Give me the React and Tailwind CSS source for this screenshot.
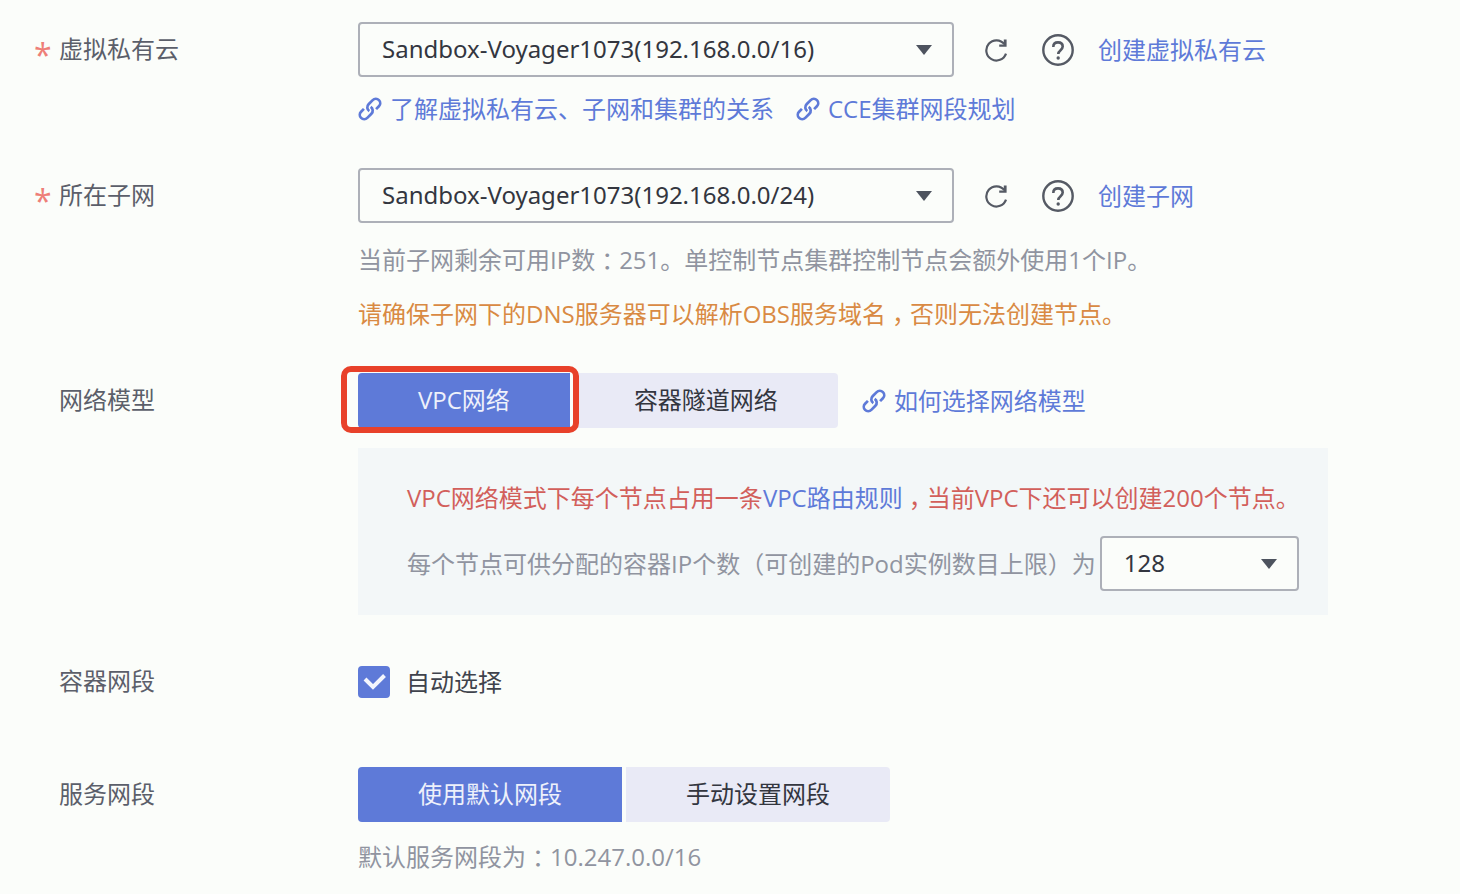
import React, { useState } from 'react';

const FONT = "font-['Open_Sans','Noto_Sans_CJK_SC',sans-serif]";

const LinkIcon = () => (
  <svg className="w-6 h-6 shrink-0" viewBox="0 0 24 24" fill="none" stroke="currentColor" strokeWidth="2.7">
    <g transform="translate(12 12) rotate(-45)">
      <path d="M4.2 4.4H8.2a4.4 4.4 0 0 0 0-8.8H2.4A4.4 4.4 0 0 0-1.9 1" />
      <path d="M-4.2-4.4H-8.2a4.4 4.4 0 0 0 0 8.8H-2.4A4.4 4.4 0 0 0 1.9-1" />
    </g>
  </svg>
);

const RefreshIcon = () => (
  <svg className="w-6 h-6" viewBox="0 0 24 24" fill="none" stroke="currentColor" strokeWidth="2.2">
    <path d="M22 15.6A10.1 10.1 0 1 1 20.4 6.2" />
    <path d="M22.6 1.4v7.4h-7.4v-2.4h4.6v-5z" fill="currentColor" stroke="none" />
  </svg>
);

const HelpIcon = () => (
  <svg className="w-8 h-8" viewBox="0 0 32 32" fill="none" stroke="currentColor" strokeWidth="2.4">
    <circle cx="16" cy="16" r="14.7" />
    <path d="M11.3 13c0-2.8 1.9-4.6 4.7-4.6s4.7 1.7 4.7 4.2c0 3.6-4.4 3.5-4.4 7.4" strokeWidth="2.6" />
    <circle cx="16.2" cy="24" r="1.7" fill="currentColor" stroke="none" />
  </svg>
);

// Half-width colon or comma, centred in a full-width cell
const Mark = ({ children }) => (
  <span className="inline-block w-6 text-center [font-feature-settings:'halt']">{children}</span>
);

const TextLink = ({ children }) => (
  <a href="#" className="text-[#5e7ad8] hover:underline">{children}</a>
);

const IconLink = ({ children }) => (
  <a href="#" className="flex items-center gap-2 text-[#5e7ad8] hover:underline">
    <LinkIcon />
    <span>{children}</span>
  </a>
);

const Select = ({ id, options, className }) => (
  <div className={`grid items-center ${className}`}>
    <select
      id={id}
      className="col-start-1 row-start-1 w-full h-[55px] appearance-none rounded-sm border-2 border-[#adb0b8] bg-[#fbfdfa] px-[22px] pb-[2px] font-['Noto_Sans',sans-serif] text-[#33363f]"
    >
      {options.map((option) => (
        <option key={option}>{option}</option>
      ))}
    </select>
    <svg className="col-start-1 row-start-1 justify-self-end mr-[22px] w-4 h-[10px] pointer-events-none" viewBox="0 0 16 10">
      <path d="M0 0h16L8 10z" fill="#4d535e" />
    </svg>
  </div>
);

const Segmented = ({ options, value, onChange }) => (
  <div className="flex gap-1">
    {options.map((option) => (
      <button
        key={option}
        type="button"
        onClick={() => onChange(option)}
        className={`h-[55px] px-[60px] pb-[2px] first:rounded-l-sm last:rounded-r-sm ${
          option === value ? 'bg-[#5e7ad8] text-[#eef1fb]' : 'bg-[#e9eaf6] text-[#33363f]'
        }`}
      >
        {option}
      </button>
    ))}
  </div>
);

const Row = ({ label, htmlFor, required, children, className = '' }) => (
  <div className={`flex items-start ${className}`}>
    <div className="w-[324px] shrink-0 h-[55px] pb-[2px] flex items-center text-[#5b5f6a]">
      <span className="w-[25px] pt-3 text-[32px] leading-8 text-[#ee7f78]">{required && '*'}</span>
      {htmlFor ? <label htmlFor={htmlFor}>{label}</label> : <span>{label}</span>}
    </div>
    <div className="min-w-0 flex-1">{children}</div>
  </div>
);

const SelectActions = ({ children }) => (
  <>
    <button type="button" aria-label="刷新" className="ml-[30px] text-[#555a64]">
      <RefreshIcon />
    </button>
    <button type="button" aria-label="帮助" className="ml-[34px] mr-6 text-[#555a64]">
      <HelpIcon />
    </button>
    <TextLink>{children}</TextLink>
  </>
);

const App = () => {
  const [model, setModel] = useState('VPC网络');
  const [service, setService] = useState('使用默认网段');
  const [auto, setAuto] = useState(true);

  return (
    <main className={`min-h-screen bg-[#fbfdfa] pl-[34px] pt-[22px] text-[24px] leading-8 ${FONT}`}>
      {/* VPC */}
      <Row label="虚拟私有云" htmlFor="vpc" required>
        <div className="flex items-center">
          <Select id="vpc" className="w-[596px]" options={['Sandbox-Voyager1073(192.168.0.0/16)']} />
          <SelectActions>创建虚拟私有云</SelectActions>
        </div>
        <div className="mt-4 flex gap-[22px]">
          <IconLink>了解虚拟私有云、子网和集群的关系</IconLink>
          <IconLink>CCE集群网段规划</IconLink>
        </div>
      </Row>

      {/* Subnet */}
      <Row label="所在子网" htmlFor="subnet" required className="mt-[43px]">
        <div className="flex items-center">
          <Select id="subnet" className="w-[596px]" options={['Sandbox-Voyager1073(192.168.0.0/24)']} />
          <SelectActions>创建子网</SelectActions>
        </div>
        <p className="mt-[21px] text-[#9094a0]">
          当前子网剩余可用IP数<Mark>：</Mark>251。单控制节点集群控制节点会额外使用1个IP。
        </p>
        <p className="mt-[22px] text-[#d98a43]">
          请确保子网下的DNS服务器可以解析OBS服务域名<Mark>，</Mark>否则无法创建节点。
        </p>
      </Row>

      {/* Network model */}
      <Row label="网络模型" className="mt-[43px]">
        <div className="flex items-center gap-6">
          <div className="relative">
            <Segmented options={['VPC网络', '容器隧道网络']} value={model} onChange={setModel} />
            <div className="absolute -left-[17px] -top-[7px] w-[238px] h-[67px] rounded-[10px] border-6 border-[#e8412a] pointer-events-none" />
          </div>
          <IconLink>如何选择网络模型</IconLink>
        </div>
        <div className="mt-5 w-fit bg-[#f3f7f8] pl-[49px] pr-7 pt-[34px] pb-6">
          <p className="text-[#d25f5b]">
            VPC网络模式下每个节点占用一条<TextLink>VPC路由规则</TextLink>
            <Mark>，</Mark>当前VPC下还可以创建200个节点。
          </p>
          <div className="mt-[22px] flex items-center gap-1 text-[#9094a0]">
            <label htmlFor="pods">每个节点可供分配的容器IP个数（可创建的Pod实例数目上限）为</label>
            <Select id="pods" className="w-[199px]" options={['128', '64', '32', '16']} />
          </div>
        </div>
      </Row>

      {/* Container CIDR */}
      <Row label="容器网段" className="mt-[39px]">
        <label className="flex w-fit h-[55px] items-center gap-4 text-[#3f434c]">
          <span className="grid place-items-center">
            <input
              type="checkbox"
              checked={auto}
              onChange={(e) => setAuto(e.target.checked)}
              className="col-start-1 row-start-1 w-8 h-8 appearance-none rounded-sm border-2 border-[#5e7ad8] checked:bg-[#5e7ad8]"
            />
            {auto && (
              <svg className="col-start-1 row-start-1 w-8 h-8 pointer-events-none" viewBox="0 0 32 32" fill="none" stroke="#f4f6fd" strokeWidth="4">
                <path d="M7 13 15 21 26.5 9.5" />
              </svg>
            )}
          </span>
          自动选择
        </label>
      </Row>

      {/* Service CIDR */}
      <Row label="服务网段" className="mt-[58px]">
        <Segmented options={['使用默认网段', '手动设置网段']} value={service} onChange={setService} />
        <p className="mt-[19px] text-[#9094a0]">
          默认服务网段为<Mark>：</Mark>10.247.0.0/16
        </p>
      </Row>
    </main>
  );
};

export default App;
